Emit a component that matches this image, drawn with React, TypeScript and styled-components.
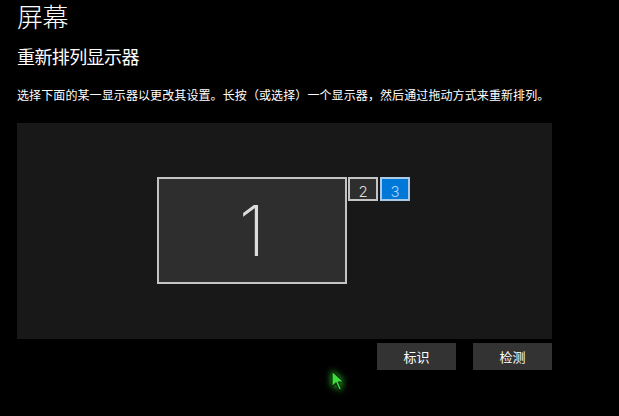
import React from "react";
import styled, { createGlobalStyle } from "styled-components";

const Global = createGlobalStyle`
  html, body {
    margin: 0;
    padding: 0;
    background: #000;
  }
  body {
    width: 619px;
    height: 416px;
    overflow: hidden;
    font-family: "Noto Sans CJK SC", "Noto Sans", sans-serif;
    color: #fff;
  }
`;

const Page = styled.div`
  position: relative;
  width: 619px;
  height: 416px;
  padding: 0 0 0 17px;
  box-sizing: border-box;
  display: flex;
  flex-direction: column;
  align-items: flex-start;
`;

const Title = styled.h1`
  margin: 0;
  font-size: 26px;
  font-weight: 300;
  line-height: 32px;
  letter-spacing: -0.5px;
`;

const Subtitle = styled.h2`
  margin: 12px 0 0;
  font-size: 18px;
  font-weight: 400;
  line-height: 24px;
  letter-spacing: -0.6px;
`;

const Description = styled.p`
  margin: 18px 0 0;
  font-size: 12px;
  line-height: 18px;
  letter-spacing: 0.1px;
`;

const Arrangement = styled.div`
  position: relative;
  margin-top: 19px;
  width: 535px;
  height: 216px;
  background: #181818;
`;

const Display = styled.div<{ $active?: boolean; $big?: boolean }>`
  position: absolute;
  box-sizing: border-box;
  display: flex;
  align-items: center;
  justify-content: center;
  border: 2px solid ${(p) => (p.$active ? "#a9c9e6" : "#c4c4c4")};
  background: ${(p) => (p.$active ? "#0078d7" : "#2e2e2f")};
  color: ${(p) => (p.$active ? "#a8d6ff" : "#dcdcdc")};
  font-family: Inter, "Open Sans", sans-serif;
  font-weight: ${(p) => (p.$big ? 200 : 300)};
  font-size: ${(p) => (p.$big ? "70px" : "15px")};
  line-height: 1;
  padding-top: ${(p) => (p.$big ? "0" : "4px")};
`;

const Actions = styled.div`
  margin-top: 4px;
  width: 535px;
  display: flex;
  justify-content: flex-end;
  gap: 17px;
`;

const Button = styled.button`
  width: 79px;
  height: 27px;
  border: none;
  background: #333333;
  color: #fff;
  font-family: "Noto Sans CJK SC", "Noto Sans", sans-serif;
  font-size: 13px;
  padding: 0;
`;

const Pointer = styled.svg`
  position: absolute;
  left: 322px;
  top: 362px;
  filter: drop-shadow(0 0 3px rgba(60, 255, 60, 0.7));
`;

const displays = [
  { id: "1", left: 140, top: 54, width: 190, height: 107, big: true },
  { id: "2", left: 331, top: 54, width: 30, height: 24 },
  { id: "3", left: 363, top: 54, width: 30, height: 24, active: true },
];

export default function App() {
  return (
    <>
      <Global />
      <Page>
        <Title>屏幕</Title>
        <Subtitle>重新排列显示器</Subtitle>
        <Description>
          选择下面的某一显示器以更改其设置。长按（或选择）一个显示器，然后通过拖动方式来重新排列。
        </Description>
        <Arrangement>
          {displays.map((d) => (
            <Display
              key={d.id}
              $big={d.big}
              $active={d.active}
              style={{ left: d.left, top: d.top, width: d.width, height: d.height }}
            >
              {d.id}
            </Display>
          ))}
        </Arrangement>
        <Actions>
          <Button>标识</Button>
          <Button>检测</Button>
        </Actions>
        <Pointer width="30" height="34" viewBox="0 0 30 34">
          <path
            d="M10 9 L10 25 L14 21 L17 28 L19.5 27 L16.5 20 L22 20 Z"
            fill="#3ddc3d"
            stroke="#0a2a0a"
            strokeWidth="1.2"
            strokeLinejoin="round"
          />
        </Pointer>
      </Page>
    </>
  );
}
